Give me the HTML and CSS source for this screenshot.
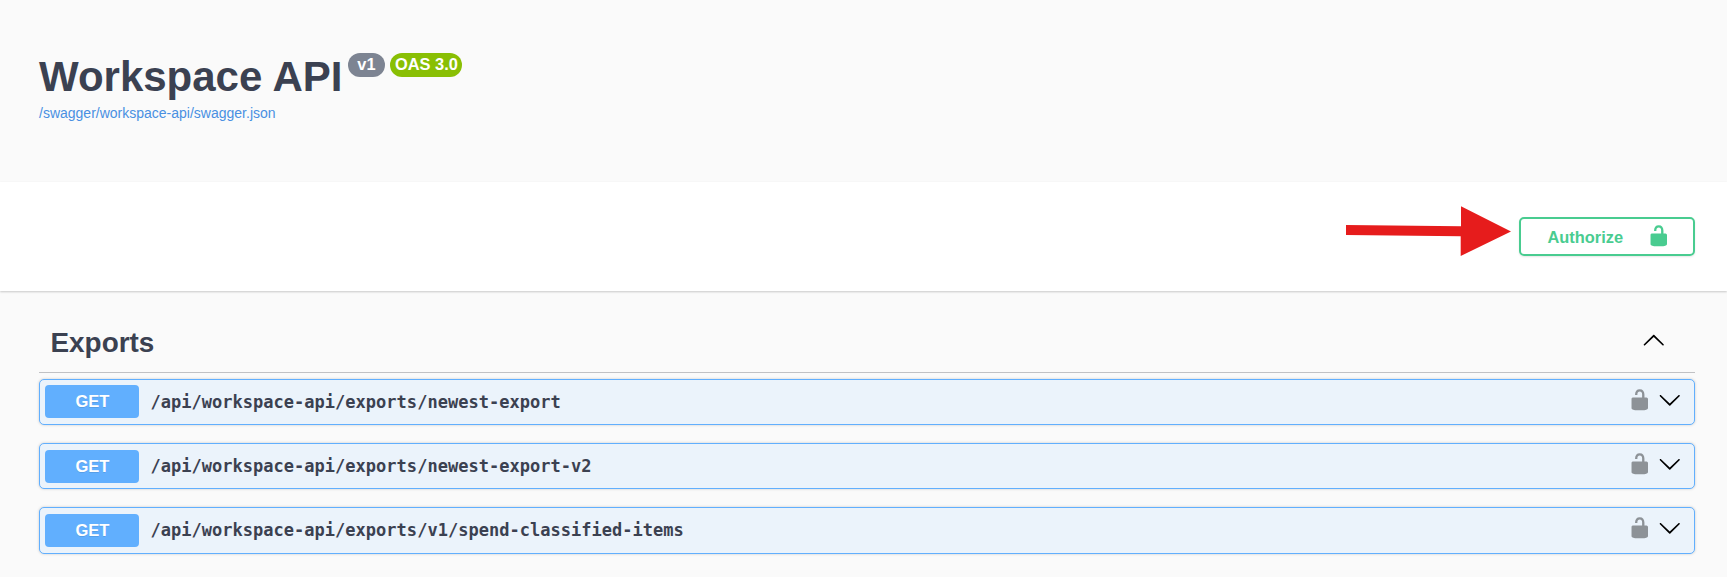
FILE: index.html
```html
<!DOCTYPE html>
<html lang="en">
<head>
<meta charset="utf-8">
<title>Workspace API</title>
<link rel="stylesheet" href="styles.css">
</head>
<body>
<svg class="defs" aria-hidden="true">
  <symbol id="unlocked" viewBox="0 0 20 20"><path d="M15.8 8H14V5.6C14 2.703 12.665 1 10 1 7.334 1 6 2.703 6 5.6V6h2v-.801C8 3.754 8.797 3 10 3c1.203 0 2 .754 2 2.199V8H4c-.553 0-1 .646-1 1.199V17c0 .549.428 1.139.951 1.307l1.197.387C5.672 18.861 6.55 19 7.1 19h5.8c.549 0 1.428-.139 1.951-.307l1.196-.387c.524-.167.953-.757.953-1.306V9.199C17 8.646 16.352 8 15.8 8z"/></symbol>
  <symbol id="chevron" viewBox="0 0 20 20"><path d="M17.418 6.109c.272-.268.709-.268.979 0s.271.701 0 .969l-7.908 7.83c-.27.268-.707.268-.979 0l-7.908-7.83c-.27-.268-.27-.701 0-.969.271-.268.709-.268.979 0L10 13.25l7.418-7.141z"/></symbol>
</svg>
<header class="info">
  <div class="heading">
    <h1 class="title">Workspace API</h1>
    <span class="badge version">v1</span>
    <span class="badge oas">OAS 3.0</span>
  </div>
  <a class="spec-link">/swagger/workspace-api/swagger.json</a>
</header>
<section class="schemes">
  <svg class="pointer" viewBox="0 0 166 50"><path d="M0 19 115 20.3V.3L165 25.4 114.7 50V30.2L0 29z"/></svg>
  <button class="authorize"><span>Authorize</span><svg class="icon"><use href="#unlocked"/></svg></button>
</section>
<main class="operations">
  <div class="tag"><h2 class="tag-name">Exports</h2><svg class="icon up"><use href="#chevron"/></svg></div>
  <div class="op"><span class="method">GET</span><span class="path">/api/workspace-api/exports/newest-export</span><svg class="icon lock"><use href="#unlocked"/></svg><svg class="icon down"><use href="#chevron"/></svg></div>
  <div class="op lower"><span class="method">GET</span><span class="path">/api/workspace-api/exports/newest-export-v2</span><svg class="icon lock"><use href="#unlocked"/></svg><svg class="icon down"><use href="#chevron"/></svg></div>
  <div class="op lower last"><span class="method">GET</span><span class="path">/api/workspace-api/exports/v1/spend-classified-items</span><svg class="icon lock"><use href="#unlocked"/></svg><svg class="icon down"><use href="#chevron"/></svg></div>
</main>
</body>
</html>
```
FILE: styles.css
```css
* { box-sizing: border-box; }
body { margin: 0; height: 577px; overflow: hidden; background: #fafafa; color: #3b4151; font-family: Arial, "Liberation Sans", sans-serif; }
.defs { display: none; }
.icon { display: block; flex: none; width: 23.5px; height: 23.5px; }
.info { height: 182px; padding: 52px 39px 0; }
.heading { display: flex; align-items: flex-start; height: 50px; }
.title { margin: 0 6px 0 0; padding-top: 1px; font-size: 42px; line-height: 48px; white-space: nowrap; }
.badge { height: 24px; margin: 1px 5px 0 0; border-radius: 12px; color: #fff; font-size: 16.4px; font-weight: 700; line-height: 22px; text-align: center; white-space: nowrap; }
.version { width: 37px; padding-right: 1px; background: #7d8492; }
.oas { width: 72px; background: #89bf04; }
.spec-link { display: block; font-size: 14px; line-height: 22px; color: #4990e2; }
.schemes { display: flex; justify-content: flex-end; align-items: flex-start; height: 109px; padding: 24px 32px 0 0; background: #fff; box-shadow: 0 1px 2px rgba(0, 0, 0, .2); }
.pointer { width: 166px; height: 50px; margin-right: 7px; fill: #e61c1c; }
.authorize { display: flex; align-items: center; justify-content: space-between; width: 176px; height: 39px; margin-top: 11px; padding: 0 24px 0 26.5px; border: 2px solid #49cc90; border-radius: 5px; background: transparent; box-shadow: 0 1px 2px rgba(0, 0, 0, .1); color: #49cc90; fill: #49cc90; font: 700 16.4px Arial, "Liberation Sans", sans-serif; }
.authorize span { padding-top: 2px; }
.authorize .icon { margin: 0 -1px 2px 0; }
.operations { padding: 0 32px 0 39px; }
.tag { display: flex; align-items: center; justify-content: space-between; height: 82px; margin-bottom: 6px; padding: 21px 30px 0 11.5px; border-bottom: 1px solid #c0c1c4; }
.tag-name { margin: 2px 0 0; font-size: 27.9px; line-height: 34px; }
.up { margin-bottom: 2px; transform: rotate(180deg); }
.op { display: flex; align-items: center; height: 46px; margin-bottom: 18px; padding: 0 13px 2px 5px; border: 1px solid #61affe; border-radius: 5px; background: #ebf3fb; box-shadow: 0 0 3px rgba(0, 0, 0, .19); }
.last { height: 47px; margin-bottom: 0; padding-bottom: 3px; }
.method { width: 94px; height: 33px; padding-left: 1px; border-radius: 4px; background: #61affe; color: #fff; font-size: 16.5px; font-weight: 700; line-height: 33px; text-align: center; text-shadow: 0 1px 0 rgba(0, 0, 0, .1); }
.lower .method { margin-top: 2px; }
.path { flex: 1; padding: 2px 0 0 11.5px; font-family: Consolas, "DejaVu Sans Mono", monospace; font-size: 17px; font-weight: 700; letter-spacing: .02px; white-space: nowrap; }
.lock { margin: 0 6px 2px 0; fill: #8d9297; }
.down { margin-bottom: 2px; }
```
